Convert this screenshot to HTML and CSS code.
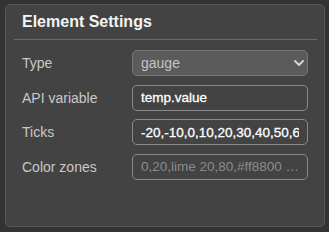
FILE: index.html
```html
<!DOCTYPE html>
<html lang="en">
<head>
  <meta charset="UTF-8">
  <meta name="viewport" content="width=device-width, initial-scale=1.0">
  <link rel="stylesheet" href="styles.css">
  <title>Element Settings</title>
</head>
<body>
  <div class="panel">
    <h2 class="panel-title">Element Settings</h2>
    <div class="divider"></div>
    <form class="settings">
      <label class="field-label" for="type">Type</label>
      <div class="select-wrap">
        <select id="type" class="field-select" disabled>
          <option>gauge</option>
        </select>
        <svg class="chevron" width="10" height="6" viewBox="0 0 10 6">
          <path d="M1 1 L5 5 L9 1" fill="none" stroke="#d8d8d8" stroke-width="1.8" stroke-linecap="round" stroke-linejoin="round"/>
        </svg>
      </div>

      <label class="field-label" for="api">API variable</label>
      <input id="api" class="field-input" type="text" value="temp.value">

      <label class="field-label" for="ticks">Ticks</label>
      <input id="ticks" class="field-input" type="text" value="-20,-10,0,10,20,30,40,50,60,70,80">

      <label class="field-label" for="zones">Color zones</label>
      <input id="zones" class="field-input" type="text" placeholder="0,20,lime 20,80,#ff8800 …">
    </form>
  </div>
</body>
</html>
```

FILE: styles.css
```css
* {
  box-sizing: border-box;
}

body {
  margin: 0;
  padding: 4px 5px;
  background-color: #333333;
  font-family: 'Liberation Sans', Arial, sans-serif;
}

.panel {
  width: 320px;
  height: 223px;
  background-color: #434343;
  border: 1px solid #575757;
  border-radius: 5px;
}

.panel-title {
  margin: 0;
  padding: 6px 16px 0;
  font-size: 16px;
  line-height: 22px;
  font-weight: bold;
  color: #f4f4f4;
}

.divider {
  height: 1px;
  margin: 6px 7px 0 8px;
  background-color: #6a6a6a;
}

.settings {
  display: grid;
  grid-template-columns: 110px 1fr;
  row-gap: 8.5px;
  align-items: center;
  padding: 10px 16px 0;
}

.field-label {
  font-size: 14px;
  color: #c9c9c9;
}

.select-wrap {
  position: relative;
}

.field-select {
  width: 100%;
  height: 26px;
  padding: 0 8px;
  appearance: none;
  -webkit-appearance: none;
  background-color: #5b5b5b;
  border: 1px solid #777777;
  border-radius: 5px;
  font-family: inherit;
  font-size: 14px;
  color: #c4c4c4;
  opacity: 1;
}

.chevron {
  position: absolute;
  right: 4px;
  top: 10px;
}

.field-input {
  width: 100%;
  height: 26px;
  padding: 0 8px;
  background-color: #434343;
  border: 1px solid #8a8a8a;
  border-radius: 5px;
  font-family: inherit;
  font-size: 13.5px;
  color: #ffffff;
  -webkit-text-stroke: 0.3px #ffffff;
  outline: none;
}

.field-input::placeholder {
  color: #8c8c8c;
  -webkit-text-stroke: 0;
}
```
